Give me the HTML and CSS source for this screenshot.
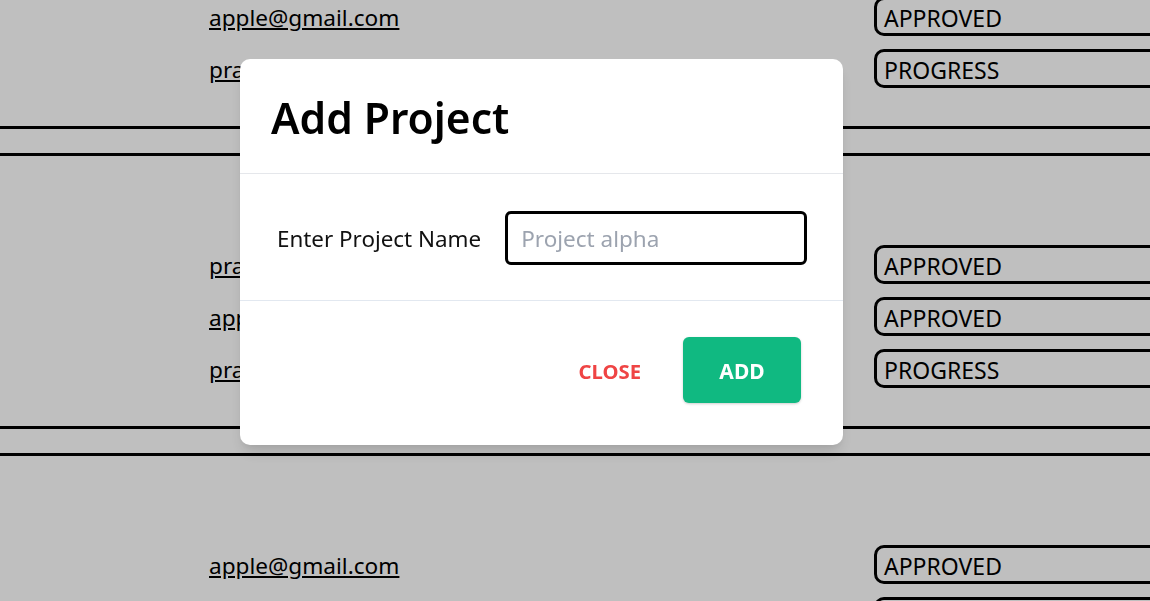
FILE: index.html
```html
<!DOCTYPE html>
<html lang="en">
<head>
<meta charset="utf-8">
<title>Projects</title>
<link rel="stylesheet" href="styles.css">
</head>
<body>
<main class="page">
  <section class="group group-first">
    <div class="row"><a class="email" href="#">apple@gmail.com</a><span class="badge">APPROVED</span></div>
    <div class="row"><a class="email" href="#">prathamesh@gmail.com</a><span class="badge">PROGRESS</span></div>
  </section>
  <section class="group">
    <div class="row"><a class="email" href="#">prathamesh@gmail.com</a><span class="badge">APPROVED</span></div>
    <div class="row"><a class="email" href="#">apple@gmail.com</a><span class="badge">APPROVED</span></div>
    <div class="row"><a class="email" href="#">prathamesh@gmail.com</a><span class="badge">PROGRESS</span></div>
  </section>
  <section class="group">
    <div class="row"><a class="email" href="#">apple@gmail.com</a><span class="badge">APPROVED</span></div>
    <div class="row"><a class="email" href="#">prathamesh@gmail.com</a><span class="badge">PROGRESS</span></div>
  </section>
</main>

<div class="overlay">
  <div class="modal">
    <div class="modal-header">
      <h3 class="modal-title">Add Project</h3>
    </div>
    <div class="modal-body">
      <label class="field-label" for="pname">Enter Project Name</label>
      <input class="field-input" id="pname" type="text" placeholder="Project alpha">
    </div>
    <div class="modal-footer">
      <button class="btn-close" type="button">CLOSE</button>
      <button class="btn-add" type="button">ADD</button>
    </div>
  </div>
</div>
</body>
</html>
```

FILE: styles.css
```css
* { box-sizing: border-box; }
html, body { margin: 0; padding: 0; }
body {
  background: #ffffff;
  font-family: "Noto Sans", "Open Sans", sans-serif;
  color: #000;
  overflow: hidden;
  height: 601px;
}
.page {
  margin-top: -7px;
}
.group {
  border-top: 3px solid #000;
  border-bottom: 3px solid #000;
  padding: 85px 0 29px;
  margin-bottom: 24px;
}
.group-first {
  border-top: none;
  padding-top: 0;
}
.row {
  height: 52px;
  display: flex;
  align-items: center;
  width: 1400px;
}
.email {
  flex: none;
  margin-left: 209px;
  width: 665px;
  color: #000;
  font-size: 22.6px;
  line-height: 1.2;
  text-decoration: underline;
  text-underline-offset: 2px;
  white-space: nowrap;
  margin-top: -2px;
}
.badge {
  flex: none;
  width: 400px;
  height: 39px;
  margin-bottom: 5px;
  border: 3px solid #000;
  border-radius: 10px;
  padding: 3px 0 0 7px;
  font-size: 23px;
  display: flex;
  align-items: center;
}
.overlay {
  position: fixed;
  inset: 0;
  background: rgba(0, 0, 0, 0.25);
}
.modal {
  position: absolute;
  left: 240px;
  top: 59px;
  width: 603px;
  background: #fff;
  border-radius: 10px;
  box-shadow: 0 10px 15px -3px rgba(0,0,0,0.12), 0 4px 6px -2px rgba(0,0,0,0.06);
  display: flex;
  flex-direction: column;
}
.modal-header {
  height: 115px;
  padding: 4px 31px 0;
  display: flex;
  align-items: center;
  border-bottom: 1px solid #e5e7eb;
}
.modal-title {
  margin: 0;
  font-size: 42.5px;
  font-weight: 600;
  line-height: 1;
}
.modal-body {
  height: 127px;
  padding: 2px 36px 0 37px;
  display: flex;
  align-items: center;
  gap: 24px;
  border-bottom: 1px solid #e2e8f0;
}
.field-label {
  font-size: 22.4px;
  color: #111;
  flex: none;
}
.field-input {
  flex: none;
  width: 302px;
  height: 54px;
  border: 3px solid #000;
  border-radius: 6px;
  padding: 0 13px;
  font-family: inherit;
  font-size: 22.5px;
  color: #000;
  outline: none;
}
.field-input::placeholder { color: #9ca3af; }
.modal-footer {
  height: 144px;
  display: flex;
  justify-content: flex-end;
  align-items: flex-start;
  padding: 36px 42px 0 0;
}
.btn-close {
  background: none;
  border: none;
  color: #ef4444;
  font-family: inherit;
  font-weight: 700;
  font-size: 20.3px;
  height: 66px;
  padding: 2px 42px 0 24px;
  cursor: pointer;
}
.btn-add {
  width: 118px;
  height: 66px;
  background: #10b981;
  color: #fff;
  border: none;
  border-radius: 6px;
  font-family: inherit;
  font-weight: 700;
  font-size: 21px;
  padding-top: 2px;
  box-shadow: 0 1px 3px rgba(0,0,0,0.12), 0 1px 2px rgba(0,0,0,0.08);
  cursor: pointer;
}
```
